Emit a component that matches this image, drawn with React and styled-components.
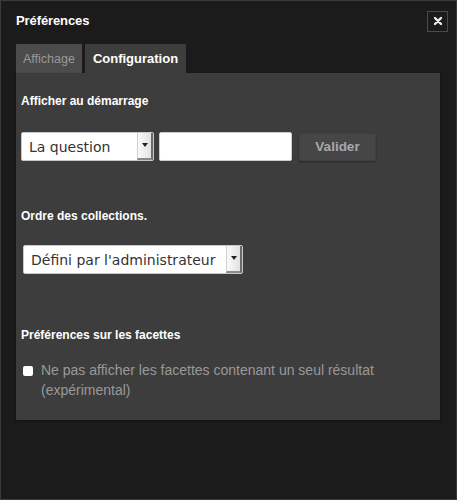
import styled, { createGlobalStyle } from "styled-components";

const GlobalStyle = createGlobalStyle`
  html, body {
    margin: 0;
    padding: 0;
    background: #1b1b1b;
  }
  body {
    font-family: "Liberation Sans", Arial, sans-serif;
  }
`;

const Dialog = styled.div`
  box-sizing: border-box;
  width: 457px;
  height: 500px;
  background: #1b1b1b;
  border: 1px solid #3a3a3a;
  padding: 0 16px 0 15px;
  display: flex;
  flex-direction: column;
`;

const TitleBar = styled.div`
  display: flex;
  align-items: center;
  justify-content: space-between;
  height: 38px;
  margin-bottom: 1px;
`;

const Title = styled.h1`
  margin: 0;
  font-size: 13px;
  font-weight: bold;
  color: #fff;
  letter-spacing: -0.1px;
`;

const CloseButton = styled.button`
  box-sizing: border-box;
  width: 21px;
  height: 21px;
  margin-right: -8px;
  margin-top: 2px;
  padding: 0;
  background: #1b1b1b;
  border: 1px solid #4a4a4a;
  color: #eee;
  display: flex;
  align-items: center;
  justify-content: center;
`;

const Tabs = styled.div`
  display: flex;
  gap: 3px;
  margin-top: 4px;
`;

const Tab = styled.div`
  height: 29px;
  padding: 0 ${(p) => (p.$active ? 8 : 7)}px;
  display: flex;
  align-items: center;
  font-size: ${(p) => (p.$active ? 13 : 12.5)}px;
  background: ${(p) => (p.$active ? "#3d3d3d" : "#4b4b4b")};
  color: ${(p) => (p.$active ? "#fff" : "#999")};
  font-weight: ${(p) => (p.$active ? "bold" : "normal")};
`;

const Panel = styled.div`
  height: 347px;
  background: #3d3d3d;
  box-shadow: 0 1px 2px rgba(0, 0, 0, 0.4);
  padding: 21px 5px 0;
  box-sizing: border-box;
`;

const SectionTitle = styled.h2`
  margin: ${(p) => p.$top || 0}px 0 0;
  font-size: 12px;
  font-weight: bold;
  color: #fff;
  line-height: 14px;
`;

const Row = styled.div`
  display: flex;
  align-items: center;
  gap: 5px;
  margin-top: ${(p) => p.$top}px;
  padding-left: ${(p) => p.$indent || 0}px;
`;

const SelectBox = styled.div`
  box-sizing: border-box;
  width: ${(p) => p.$width}px;
  height: 29px;
  background: #fff;
  border: 1px solid #c8c8c8;
  border-radius: 2px;
  display: flex;
  align-items: stretch;
  font-family: "DejaVu Sans", "Liberation Sans", sans-serif;
  font-size: 14px;
  color: #333;
`;

const SelectText = styled.span`
  flex: 1;
  display: flex;
  align-items: center;
  padding-left: 7px;
  white-space: nowrap;
`;

const SelectArrow = styled.span`
  width: 13px;
  background: linear-gradient(to right, #fafafa, #e2e2e2);
  border-left: 1px solid #d0d0d0;
  border-right: 2px solid #6a6a6a;
  border-bottom: 2px solid #8a8a8a;
  display: flex;
  align-items: center;
  justify-content: center;
  &::after {
    content: "";
    border-left: 3px solid transparent;
    border-right: 3px solid transparent;
    border-top: 4px solid #222;
    margin-top: -2px;
  }
`;

const TextInput = styled.input`
  box-sizing: border-box;
  width: 133px;
  height: 29px;
  border: 1px solid #ccc;
  border-radius: 2px;
  background: #fff;
  outline: none;
`;

const Button = styled.button`
  box-sizing: border-box;
  width: 77px;
  height: 28px;
  margin-left: 2px;
  background: #464646;
  border: 1px solid #404040;
  box-shadow: 0 1px 2px rgba(0, 0, 0, 0.35);
  border-radius: 2px;
  color: #a9a9a9;
  font-family: "Liberation Sans", Arial, sans-serif;
  font-weight: bold;
  font-size: 13.5px;
`;

const CheckRow = styled.label`
  display: flex;
  align-items: flex-start;
  gap: 8px;
  margin-top: 18px;
  padding-left: 2px;
  color: #999;
  font-size: 14px;
  line-height: 20px;
`;

const Check = styled.span`
  flex: none;
  width: 10px;
  height: 10px;
  margin-top: 6px;
  background: #fff;
  border-radius: 2px;
`;

export default function App() {
  return (
    <>
      <GlobalStyle />
      <Dialog>
        <TitleBar>
          <Title>Préférences</Title>
          <CloseButton aria-label="Fermer">
            <svg width="10" height="10" viewBox="0 0 10 10">
              <path d="M2 2 L8 8 M8 2 L2 8" stroke="#eee" strokeWidth="2.4" strokeLinecap="round" />
            </svg>
          </CloseButton>
        </TitleBar>
        <Tabs>
          <Tab>Affichage</Tab>
          <Tab $active>Configuration</Tab>
        </Tabs>
        <Panel>
          <SectionTitle>Afficher au démarrage</SectionTitle>
          <Row $top={24}>
            <SelectBox $width={133}>
              <SelectText>La question</SelectText>
              <SelectArrow />
            </SelectBox>
            <TextInput />
            <Button>Valider</Button>
          </Row>
          <SectionTitle $top={48}>Ordre des collections.</SectionTitle>
          <Row $top={22} $indent={2}>
            <SelectBox $width={220}>
              <SelectText>Défini par l'administrateur</SelectText>
              <SelectArrow />
            </SelectBox>
          </Row>
          <SectionTitle $top={54}>Préférences sur les facettes</SectionTitle>
          <CheckRow>
            <Check />
            <span>
              Ne pas afficher les facettes contenant un seul résultat
              <br />
              (expérimental)
            </span>
          </CheckRow>
        </Panel>
      </Dialog>
    </>
  );
}
